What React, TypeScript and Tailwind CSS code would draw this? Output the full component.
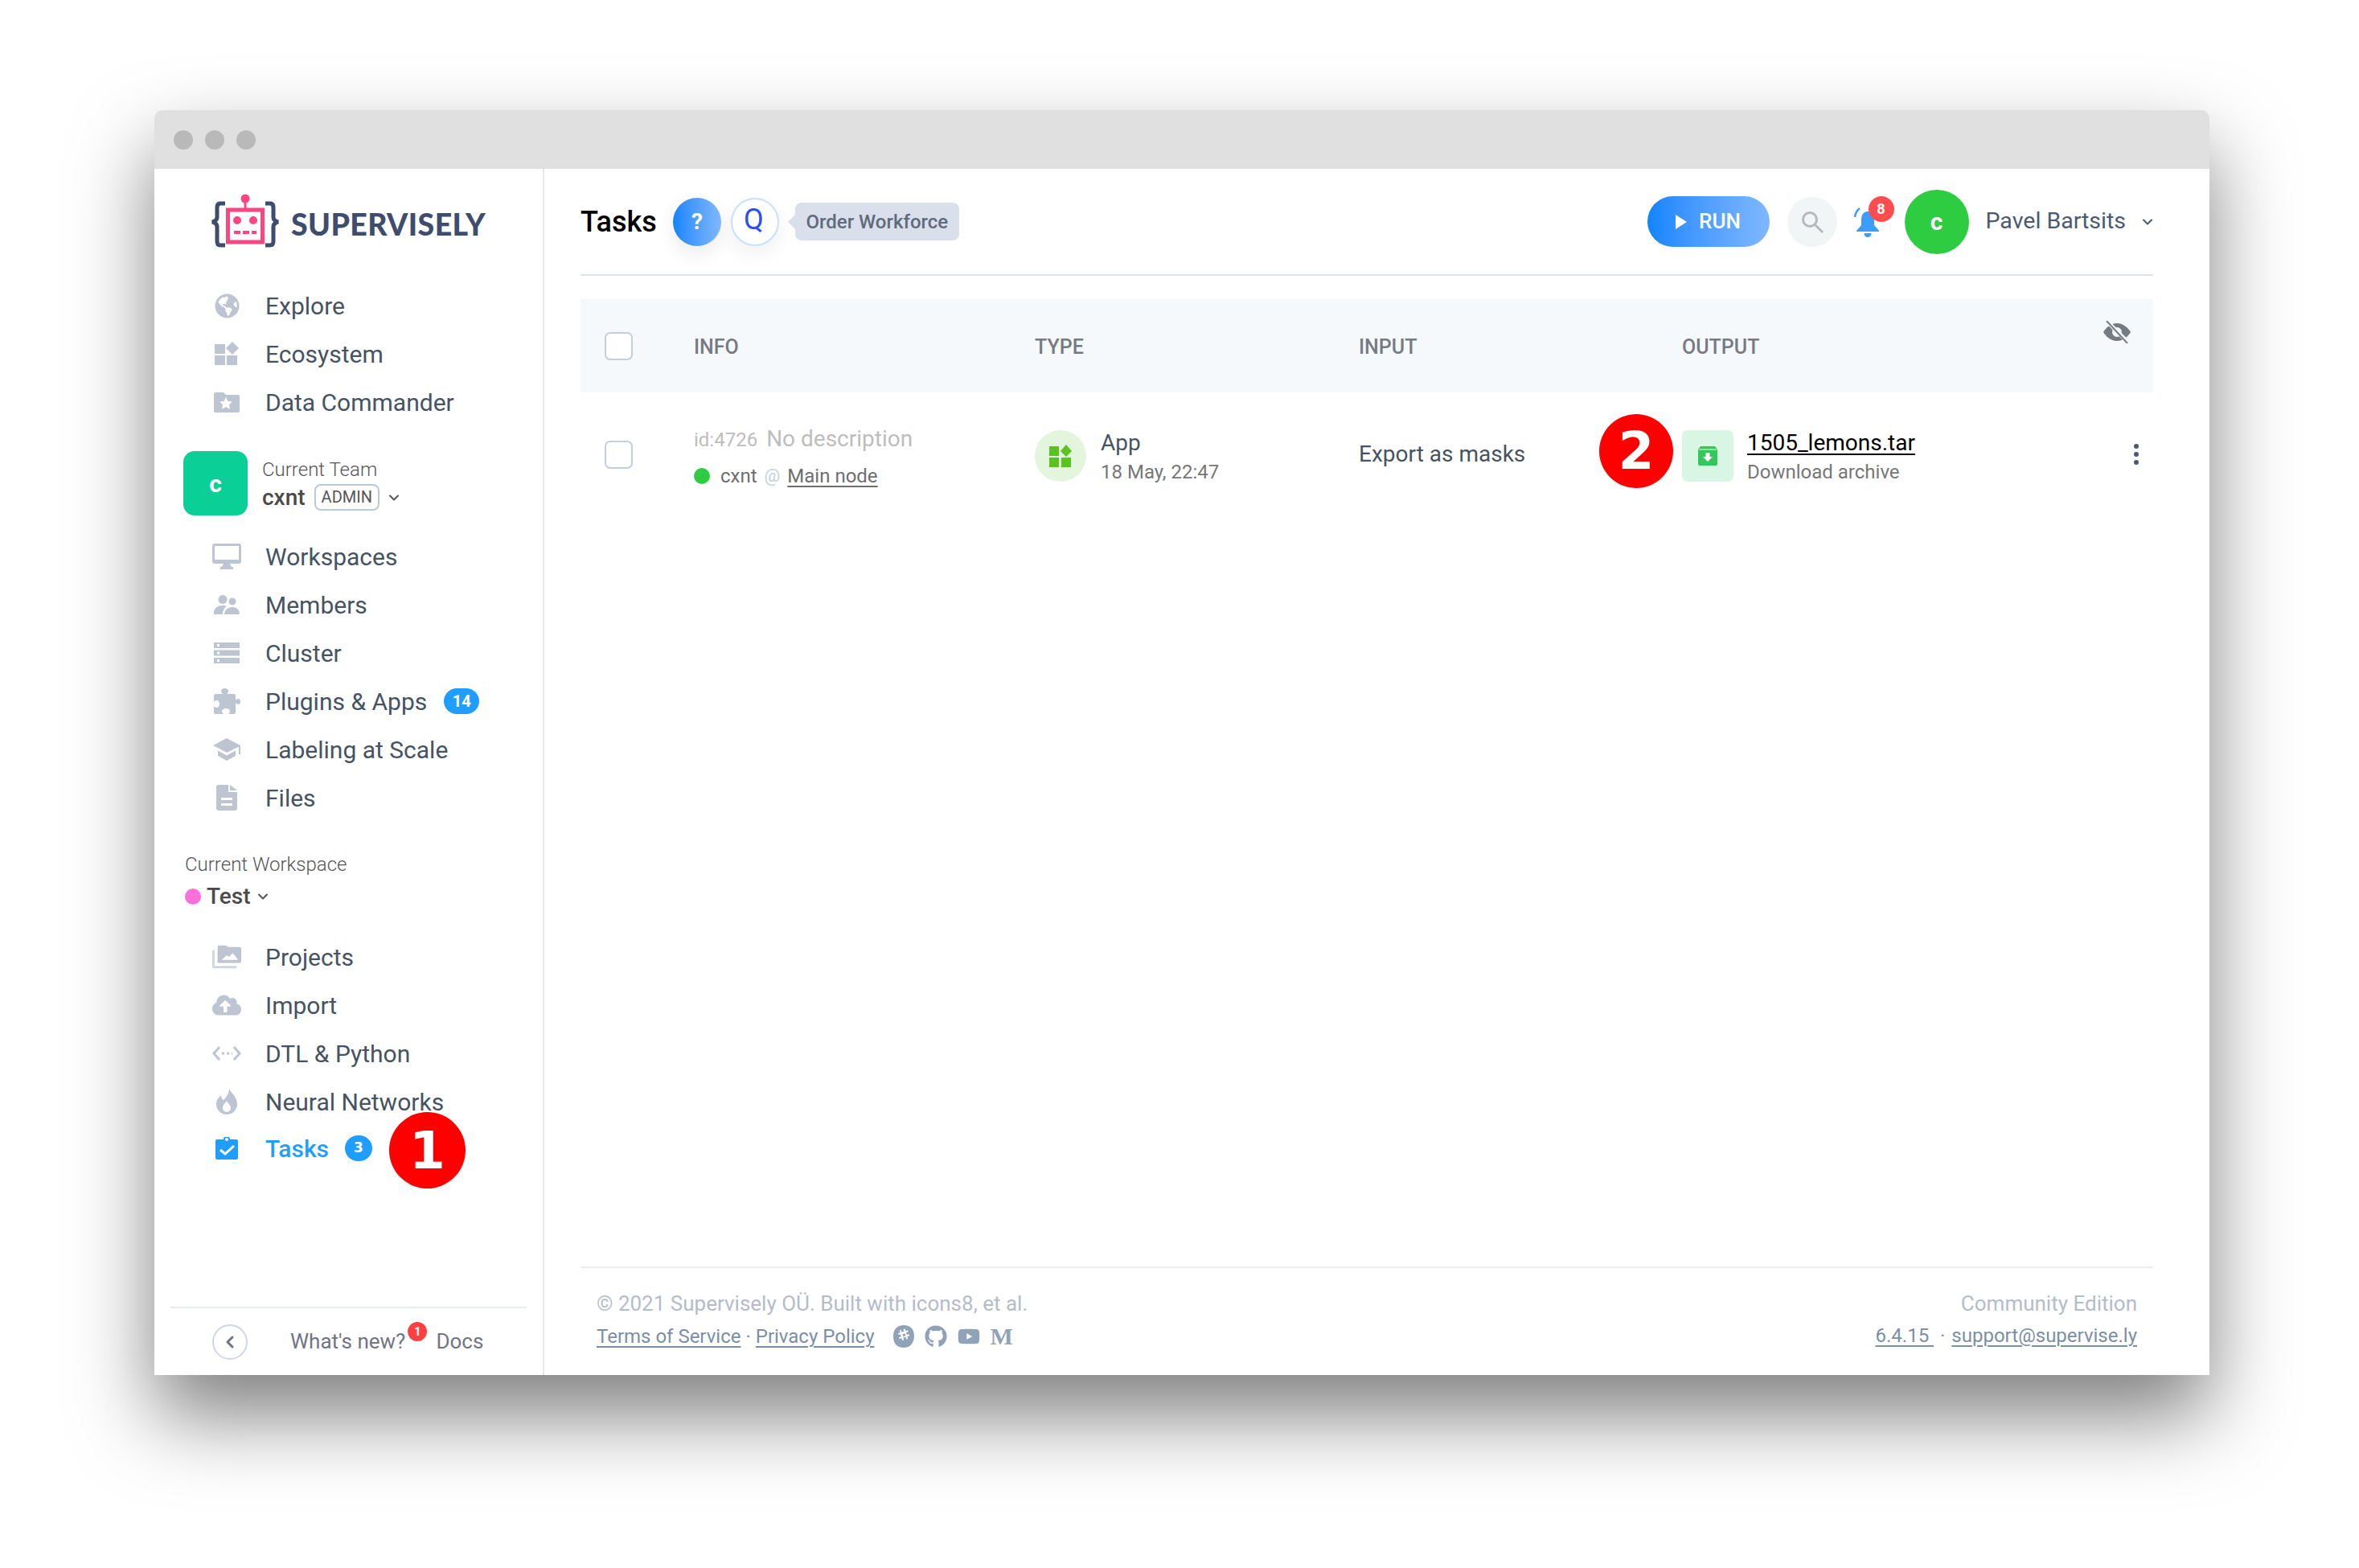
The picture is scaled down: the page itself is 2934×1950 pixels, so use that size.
import { ReactNode } from "react";
import { FaGithub, FaYoutube, FaCloudUploadAlt, FaGlobeAmericas } from "react-icons/fa";
import { ChevronDown, ChevronLeft } from "lucide-react";

const iconTone = "#bcc5d1";

const EcosystemIcon = () => (
  <svg width="32" height="30" viewBox="0 0 32 30" fill={iconTone}>
    <rect x="1" y="3" width="13" height="12" />
    <rect x="1" y="17" width="13" height="12" />
    <rect x="16" y="17" width="13" height="12" />
    <path d="M23 0l8 8-8 8-8-8z" />
  </svg>
);

const FolderStarIcon = () => (
  <svg width="32" height="26" viewBox="0 0 32 26" fill={iconTone}>
    <path d="M2 1h10l3 3h15a2 2 0 0 1 2 2v18a2 2 0 0 1-2 2H2a2 2 0 0 1-2-2V3a2 2 0 0 1 2-2z" />
    <path fill="#fff" d="M15 7l2.4 5 5.6.6-4.100 3.700 1.200 5.500L15 19l-5.100 2.800 1.200-5.500L7 12.600l5.600-.6z" />
  </svg>
);

const MonitorIcon = () => (
  <svg width="36" height="32" viewBox="0 0 36 32" fill={iconTone}>
    <path fillRule="evenodd" d="M3 0h30a3 3 0 0 1 3 3v19a3 3 0 0 1-3 3H3a3 3 0 0 1-3-3V3a3 3 0 0 1 3-3zm0 3v17h30V3z" />
    <path d="M14 25h8l2 4h2v3H10v-3h2z" />
  </svg>
);

const MembersIcon = () => (
  <svg width="32" height="24" viewBox="0 0 32 24" fill={iconTone}>
    <circle cx="11" cy="5.500" r="5.500" />
    <circle cx="23" cy="8" r="4.500" />
    <path d="M0 24v-2c0-6 5-9 11-9 2 0 4 .5 5 1-3 2-5 5-5 10z" />
    <path d="M13 24c0-5 4-9 10-9s9 4 9 9z" />
  </svg>
);

const ServerIcon = () => (
  <svg width="32" height="26" viewBox="0 0 32 26" fill={iconTone}>
    <path fillRule="evenodd" d="M0 0h32v7H0zm4 2v3h3V2zM0 9.500h32v7H0zm4 2v3h3v-3zM0 19h32v7H0zm4 2v3h3v-3z" />
  </svg>
);

const PuzzleIcon = () => (
  <svg width="33" height="32" viewBox="0 0 33 32" fill={iconTone}>
    <path d="M2 7h9c-1-1-2-2-2-3.500C9 1.500 11 0 13.500 0S18 1.500 18 3.500C18 5 17 6 16 7h9c1 0 2 1 2 2v6c1-1 2-2 3.500-2 1.500 0 2.500 1.500 2.500 3.500S32 20 30.500 20c-1.500 0-2.500-1-3.500-2v12c0 1-1 2-2 2h-7c1-1 2-2 2-3.500 0-2-2.500-3.500-5-3.500s-5 1.500-5 3.500c0 1.500 1 2.500 2 3.500H2c-1 0-2-1-2-2v-8c1 1 2 2 3.500 2C5.500 24 7 22 7 19.500S5.500 15 3.500 15C2 15 1 16 0 17V9c0-1 1-2 2-2z" />
  </svg>
);

const CapIcon = () => (
  <svg width="34" height="28" viewBox="0 0 34 28" fill={iconTone}>
    <path d="M17 0l17 9v11h-2v-9.500L17 18 0 9z" />
    <path d="M6 15.500l11 6 11-6V22l-11 6-11-6z" />
  </svg>
);

const FileIcon = () => (
  <svg width="26" height="32" viewBox="0 0 26 32" fill={iconTone}>
    <path fillRule="evenodd" d="M3 0h12v9h11v20a3 3 0 0 1-3 3H3a3 3 0 0 1-3-3V3a3 3 0 0 1 3-3zm3 16v3h14v-3zm0 7v3h14v-3z" />
    <path d="M17 0l9 7h-9z" />
  </svg>
);

const ProjectsIcon = () => (
  <svg width="38" height="30" viewBox="0 0 38 30" fill={iconTone}>
    <path fillRule="evenodd" d="M7 2a2 2 0 0 1 2-2h9l3 2h15a2 2 0 0 1 2 2v17a2 2 0 0 1-2 2H7zm5 17h22l-7-9-5 5-3-2z" />
    <path fillOpacity="0.7" d="M0 6h3v21h29v3H3a3 3 0 0 1-3-3z" />
  </svg>
);

const CodeIcon = () => (
  <svg width="36" height="20" viewBox="0 0 36 20" fill="none" stroke={iconTone} strokeWidth="3">
    <path d="M9 2l-7 8 7 8M27 2l7 8-7 8" />
    <path d="M12 10h13" strokeDasharray="3 3" />
  </svg>
);

const FlameIcon = () => (
  <svg width="26" height="32" viewBox="0 0 26 32" fill={iconTone}>
    <path fillRule="evenodd" d="M16 0c1 4 10 9 10 19a13 13 0 0 1-26 0C0 14 3 11 6 8c0 3 1 5 3 6 3-3 7-8 7-14zM13 15c-1 3-5 4-5 9a5 5 0 0 0 10 0c0-4-4-6-5-9z" />
  </svg>
);

const ClipboardIcon = () => (
  <svg width="28" height="28" viewBox="0 0 28 28" fill="#1f9eff">
    <path fillRule="evenodd" d="M2 3h8a4 4 0 0 1 8 0h8a2 2 0 0 1 2 2v21a2 2 0 0 1-2 2H2a2 2 0 0 1-2-2V5a2 2 0 0 1 2-2zm12-2a2 2 0 1 0 0 4 2 2 0 0 0 0-4z" />
    <path d="M6 16l6 5 11-10" fill="none" stroke="#fff" strokeWidth="3" />
  </svg>
);

const Logo = () => (
  <svg width="84" height="70" viewBox="0 0 84 70">
    <path d="M17 12h-6c-3 0-4 2-4 5v12c0 3-2 5-6 6 4 1 6 3 6 6v18c0 3 1 5 4 5h6" fill="none" stroke="#3e4c6e" strokeWidth="5" />
    <path d="M67 12h6c3 0 4 2 4 5v12c0 3 2 5 6 6-4 1-6 3-6 6v18c0 3-1 5-4 5h-6" fill="none" stroke="#3e4c6e" strokeWidth="5" />
    <circle cx="42" cy="6" r="5.500" fill="#fd4580" />
    <rect x="40.500" y="8" width="3" height="12" fill="#fd4580" />
    <rect x="20.500" y="20" width="43" height="40" fill="none" stroke="#fd4580" strokeWidth="5" />
    <circle cx="32" cy="33" r="5" fill="#fd4580" />
    <circle cx="52" cy="33" r="5" fill="#fd4580" />
    <path d="M28 48h28" stroke="#fd4580" strokeWidth="4" strokeDasharray="8 3" />
  </svg>
);

const SlackRound = () => (
  <svg width="26" height="28" viewBox="0 0 26 28" fill="#8fa2b8">
    <path fillRule="evenodd" d="M13 0c8 0 13 5 13 13 0 9-5 15-13 15S0 23 0 14C0 5 5 0 13 0zM9 9l-3 1 .500 2 2.500-.800.800 3-2.800.800.600 2 2.800-.800.800 2.800 2-.600-.800-2.800 3-.900.900 2.800 2-.600-.900-2.800 2.800-.900-.600-2-2.800.900-.800-3 2.800-.800-.700-2-2.700.900-.900-2.800-2 .600.900 2.800-3 .900-.900-2.800-2 .600zm2.500 2.200l3-.900.900 3-3 .900z" />
  </svg>
);

const SearchGlyph = () => (
  <svg width="28" height="28" viewBox="0 0 28 28" fill="none" stroke="#b5b9bd" strokeWidth="3">
    <circle cx="11" cy="11" r="8.500" />
    <path d="M17 17l10 10" />
  </svg>
);

const Bell = () => (
  <svg width="32" height="38" viewBox="0 0 32 38" fill="#3d9dfb">
    <path d="M17 6c6 0 8 5 8 11v6l6 7v1H3v-1l6-7v-6c0-6 2-11 8-11z" />
    <path d="M12.500 33h9c0 3-2 5-4.500 5s-4.500-2-4.500-5z" />
    <path d="M7 2C3 5 1.500 8 1 13" fill="none" stroke="#3d9dfb" strokeWidth="2.500" />
  </svg>
);

const HiddenEye = () => (
  <svg width="34" height="28" viewBox="0 0 34 28" fill="#757b82">
    <path fillRule="evenodd" d="M17 3c8 0 14 6 17 11-3 5-9 11-17 11S3 19 0 14C3 9 9 3 17 3zm0 5a6 6 0 1 0 0 12 6 6 0 0 0 0-12z" />
    <path d="M4 0l27 27" fill="none" stroke="#f6f9fc" strokeWidth="5" />
    <path d="M4 0l26 28" fill="none" stroke="#757b82" strokeWidth="2" />
  </svg>
);

const DownloadBox = () => (
  <svg width="24" height="24" viewBox="0 0 24 24" fill="#34c759">
    <path d="M3 0h18l3 4v18a2 2 0 0 1-2 2H2a2 2 0 0 1-2-2V4z" />
    <path d="M1 4h22" stroke="#a9ebc0" strokeWidth="1.500" />
    <path d="M9.500 8h5v5h3.500l-6 6-6-6h3.500z" fill="#fff" />
  </svg>
);

const AppGrid = () => (
  <svg width="28" height="28" viewBox="0 0 28 28" fill="#5cc21f">
    <rect x="0" y="2" width="12" height="12" />
    <rect x="0" y="16" width="12" height="12" />
    <rect x="15" y="16" width="12" height="12" />
    <path d="M21 0l7 8-7 7-7-7z" />
  </svg>
);

type NavProps = { icon: ReactNode; label: string; active?: boolean; children?: ReactNode };

const NavRow = ({ icon, label, active, children }: NavProps) => (
  <div className="relative flex h-[60px] items-center pl-[72px]">
    <span className="flex w-[36px] shrink-0 items-center justify-center">{icon}</span>
    <span className={active ? "ml-[30px] text-[30px] font-medium text-[#1f9eff]" : "ml-[30px] text-[30px] text-[#465362]"}>{label}</span>
    {children}
  </div>
);

const Annotation = ({ n, className }: { n: string; className: string }) => (
  <div className={`absolute flex items-center justify-center rounded-full bg-[#ff0000] font-['DejaVu_Sans'] text-[64px] font-bold text-white ${className}`}>
    {n}
  </div>
);

const Sidebar = () => (
  <aside className="flex w-[485px] shrink-0 flex-col border-r-2 border-[#e4e8ef]">
    <div className="flex h-[140px] items-start pl-[71px] pt-[31px]">
      <Logo />
      <span className="ml-[15px] mt-[13px] font-['Lato'] text-[37.500px] font-black leading-[50px] tracking-[0.4px] text-[#3e4c6e]">SUPERVISELY</span>
    </div>
    <NavRow icon={<FaGlobeAmericas size={31} color={iconTone} />} label="Explore" />
    <NavRow icon={<EcosystemIcon />} label="Ecosystem" />
    <NavRow icon={<FolderStarIcon />} label="Data Commander" />

    <div className="ml-[36px] mt-[31px] flex h-[80px] items-center">
      <div className="flex h-[80px] w-[80px] items-center justify-center rounded-[14px] bg-[#0acf97] text-[30px] font-bold text-white">c</div>
      <div className="ml-[18px] pt-[3px]">
        <div className="text-[24px] font-light leading-[30px] text-[#555]">Current Team</div>
        <div className="mt-[2px] flex items-center">
          <span className="text-[28px] font-medium leading-[36px] text-[#4a4a4a]">cxnt</span>
          <span className="ml-[11px] rounded-[8px] border-2 border-[#bcc8d6] px-[7px] text-[20px] leading-[29px] text-[#555]">ADMIN</span>
          <ChevronDown size={20} strokeWidth={2.5} className="ml-[8px] text-[#555]" />
        </div>
      </div>
    </div>

    <div className="mt-[21px]">
      <NavRow icon={<MonitorIcon />} label="Workspaces" />
      <NavRow icon={<MembersIcon />} label="Members" />
      <NavRow icon={<ServerIcon />} label="Cluster" />
      <NavRow icon={<PuzzleIcon />} label="Plugins & Apps">
        <span className="ml-[21px] flex h-[32px] w-[44px] items-center justify-center rounded-full bg-[#1f9eff] text-[20px] font-bold text-white">14</span>
      </NavRow>
      <NavRow icon={<CapIcon />} label="Labeling at Scale" />
      <NavRow icon={<FileIcon />} label="Files" />
    </div>

    <div className="ml-[38px] mt-[36px] text-[24px] font-light leading-[34px] text-[#555]">Current Workspace</div>
    <div className="ml-[38px] mt-[3px] flex h-[40px] items-center">
      <span className="h-[20px] w-[20px] rounded-full bg-[#ff6fdc]" />
      <span className="ml-[7px] text-[28px] font-medium text-[#4a4a4a]">Test</span>
      <ChevronDown size={20} strokeWidth={2.5} className="ml-[5px] text-[#555]" />
    </div>

    <div className="mt-[25px]">
      <NavRow icon={<ProjectsIcon />} label="Projects" />
      <NavRow icon={<FaCloudUploadAlt size={38} color={iconTone} />} label="Import" />
      <NavRow icon={<CodeIcon />} label="DTL & Python" />
      <NavRow icon={<FlameIcon />} label="Neural Networks" />
      <div className="-mt-[2px]">
        <NavRow icon={<ClipboardIcon />} label="Tasks" active>
          <span className="ml-[20px] flex h-[32px] w-[34px] items-center justify-center rounded-full bg-[#1f9eff] font-['DejaVu_Sans'] text-[17px] font-bold text-white">3</span>
          <Annotation n="1" className="left-[292px] top-[-15px] h-[95px] w-[95px]" />
        </NavRow>
      </div>
    </div>

    <div className="mx-[20px] mt-auto flex h-[85px] items-center border-t-2 border-[#e8ebf5] pl-[52px]">
      <span className="flex h-[44px] w-[44px] items-center justify-center rounded-full border-2 border-[#d0d6e6]">
        <ChevronLeft size={24} strokeWidth={3} className="text-[#6f7583]" />
      </span>
      <span className="relative ml-[53px] text-[26px] text-[#6f7583]">
        What's new?
        <span className="absolute right-[-27px] top-[-5px] flex h-[24px] w-[24px] items-center justify-center rounded-full bg-[#ff4040] text-[15px] font-bold text-white">1</span>
      </span>
      <span className="ml-[38px] text-[26px] text-[#6f7583]">Docs</span>
    </div>
  </aside>
);

const Header = () => (
  <header className="flex h-[133px] shrink-0 items-center border-b-2 border-[#e0e4ea]">
    <h1 className="text-[36px] font-medium text-black">Tasks</h1>
    <span className="ml-[20px] flex h-[60px] w-[60px] items-center justify-center rounded-full bg-gradient-to-r from-[#0a84ff] to-[#7fb8ff] text-[28px] font-bold text-white shadow-[0_10px_24px_rgba(0,0,0,0.08)]">?</span>
    <span className="ml-[12px] flex h-[60px] w-[60px] items-center justify-center rounded-full border-2 border-[#c6e0ff] bg-white pb-[6px] pr-[3px] text-[36px] text-[#2b50f0] shadow-[0_10px_24px_rgba(0,0,0,0.06)]">Q</span>
    <span className="relative ml-[20px] flex h-[47px] w-[204px] items-center justify-center rounded-[8px] bg-[#d9dfeb] text-[24px] font-medium text-[#5f6b7c]">
      <span className="absolute left-[-9px] top-[15px] h-0 w-0 border-y-[9px] border-r-[9px] border-y-transparent border-r-[#d9dfeb]" />
      Order Workforce
    </span>
    <button className="ml-auto flex h-[63px] w-[152px] items-center justify-center rounded-full bg-gradient-to-r from-[#0a84ff] to-[#7fb8ff] text-[26px] font-medium text-white">
      <span className="mr-[15px] h-0 w-0 border-y-[9px] border-l-[14px] border-y-transparent border-l-white" />
      RUN
    </button>
    <span className="ml-[22px] flex h-[62px] w-[62px] items-center justify-center rounded-full bg-[#f2f5f6]">
      <SearchGlyph />
    </span>
    <span className="relative ml-[19px] flex h-[40px] w-[36px] items-center justify-center">
      <Bell />
      <span className="absolute left-[20px] top-[-12px] flex h-[32px] w-[32px] items-center justify-center rounded-full bg-[#ff4d4f] text-[18px] font-bold text-white">8</span>
    </span>
    <span className="ml-[29px] flex h-[80px] w-[80px] items-center justify-center rounded-full bg-[#2ecc40] text-[30px] font-bold text-white">c</span>
    <span className="ml-[21px] text-[28.500px] text-[#4a5a72]">Pavel Bartsits</span>
    <ChevronDown size={20} strokeWidth={2.5} className="-mr-[3px] ml-[17px] text-[#4a5a72]" />
  </header>
);

const Checkbox = () => <span className="block h-[35px] w-[35px] rounded-[7px] border-2 border-[#c3cfdd] bg-white" />;

const gridCols = "grid grid-cols-[141px_424px_403px_402px_1fr] items-center";

const TaskTable = () => (
  <section className="mt-[29px]">
    <div className={`${gridCols} h-[116px] bg-[#f6f9fc] text-[25px] font-medium text-[#757b82]`}>
      <span className="pl-[30px]"><Checkbox /></span>
      <span className="pt-[3px]">INFO</span>
      <span className="pt-[3px]">TYPE</span>
      <span className="pt-[3px]">INPUT</span>
      <span className="relative pt-[3px]">
        OUTPUT
        <span className="absolute right-[28px] top-[-11px]"><HiddenEye /></span>
      </span>
    </div>
    <div className={`${gridCols} h-[154px]`}>
      <span className="pl-[30px]"><Checkbox /></span>
      <div className="mt-[6px]">
        <div className="flex items-baseline leading-[40px] text-[#bdbdbd]">
          <span className="text-[24px]">id:4726</span>
          <span className="ml-[11px] text-[28px]">No description</span>
        </div>
        <div className="mt-[7px] flex items-center leading-[36px]">
          <span className="h-[20px] w-[20px] rounded-full bg-[#2ecc40]" />
          <span className="ml-[13px] text-[24px] text-[#6e6e6e]">cxnt</span>
          <span className="ml-[9px] text-[22px] text-[#c3cfdd]">@</span>
          <span className="ml-[9px] text-[24px] text-[#6e6e6e] underline decoration-2 underline-offset-4">Main node</span>
        </div>
      </div>
      <div className="mt-[4px] flex items-center">
        <span className="flex h-[64px] w-[64px] items-center justify-center rounded-full bg-[#e3f5dc]"><AppGrid /></span>
        <div className="ml-[18px] mt-[3px]">
          <div className="text-[28px] leading-[36px] text-[#465362]">App</div>
          <div className="text-[24px] leading-[36px] text-[#777]">18 May, 22:47</div>
        </div>
      </div>
      <span className="text-[28px] text-[#465362]">Export as masks</span>
      <div className="relative mt-[4px] flex items-center">
        <Annotation n="2" className="left-[-103px] top-[-15px] h-[92px] w-[92px]" />
        <span className="flex h-[64px] w-[64px] items-center justify-center rounded-[7px] bg-[#d9f6e4]"><DownloadBox /></span>
        <div className="ml-[17px] mt-[3px]">
          <div className="text-[28px] leading-[36px] text-black underline decoration-2 underline-offset-4">1505_lemons.tar</div>
          <div className="text-[24px] leading-[36px] text-[#777]">Download archive</div>
        </div>
        <span className="mb-[5px] ml-auto mr-[18px] flex flex-col gap-[4px]">
          <i className="h-[6px] w-[6px] rounded-full bg-[#4a5a72]" />
          <i className="h-[6px] w-[6px] rounded-full bg-[#4a5a72]" />
          <i className="h-[6px] w-[6px] rounded-full bg-[#4a5a72]" />
        </span>
      </div>
    </div>
  </section>
);

const PageFooter = () => (
  <footer className="mt-auto flex h-[135px] justify-between border-t-2 border-[#eeeeee] px-[20px] pt-[26px] text-[26px]">
    <div>
      <div className="leading-[36px] text-[#b4bccb]">© 2021 Supervisely OÜ. Built with icons8, et al.</div>
      <div className="mt-[5px] flex items-center text-[24px] leading-[36px] text-[#7a8fa6]">
        <a className="underline decoration-2 underline-offset-4">Terms of Service</a>
        <span className="mx-[6px]">·</span>
        <a className="underline decoration-2 underline-offset-4">Privacy Policy</a>
        <span className="ml-[23px] flex items-center gap-[13px]">
          <SlackRound />
          <FaGithub size={28} color="#8fa2b8" />
          <FaYoutube size={28} color="#8fa2b8" />
          <span className="font-['Liberation_Serif'] text-[30px] font-bold leading-none text-[#8fa2b8]">M</span>
        </span>
      </div>
    </div>
    <div className="text-right">
      <div className="leading-[36px] text-[#b4bccb]">Community Edition</div>
      <div className="mt-[4px] text-[24px] leading-[36px] text-[#7a8fa6]">
        <a className="underline decoration-2 underline-offset-4">6.4.15&nbsp;</a>
        <span className="mx-[8px]">·</span>
        <a className="underline decoration-2 underline-offset-4">support@supervise.ly</a>
      </div>
    </div>
  </footer>
);

export default function App() {
  return (
    <div className="min-h-[1950px] bg-white pl-[192px] pt-[137px] font-['Roboto',sans-serif]">
      <div className="flex h-[1573px] w-[2556px] flex-col rounded-t-[10px] bg-white shadow-[0_50px_100px_rgba(0,0,0,0.5)]">
        <div className="flex h-[73px] shrink-0 items-center gap-[15px] rounded-t-[10px] bg-[#e0e0e0] pl-[24px]">
          <span className="h-[24px] w-[24px] rounded-full bg-[#b9b9b9]" />
          <span className="h-[24px] w-[24px] rounded-full bg-[#b9b9b9]" />
          <span className="h-[24px] w-[24px] rounded-full bg-[#b9b9b9]" />
        </div>
        <div className="flex min-h-0 flex-1">
          <Sidebar />
          <main className="flex flex-1 flex-col pl-[45px] pr-[70px]">
            <Header />
            <TaskTable />
            <PageFooter />
          </main>
        </div>
      </div>
    </div>
  );
}
